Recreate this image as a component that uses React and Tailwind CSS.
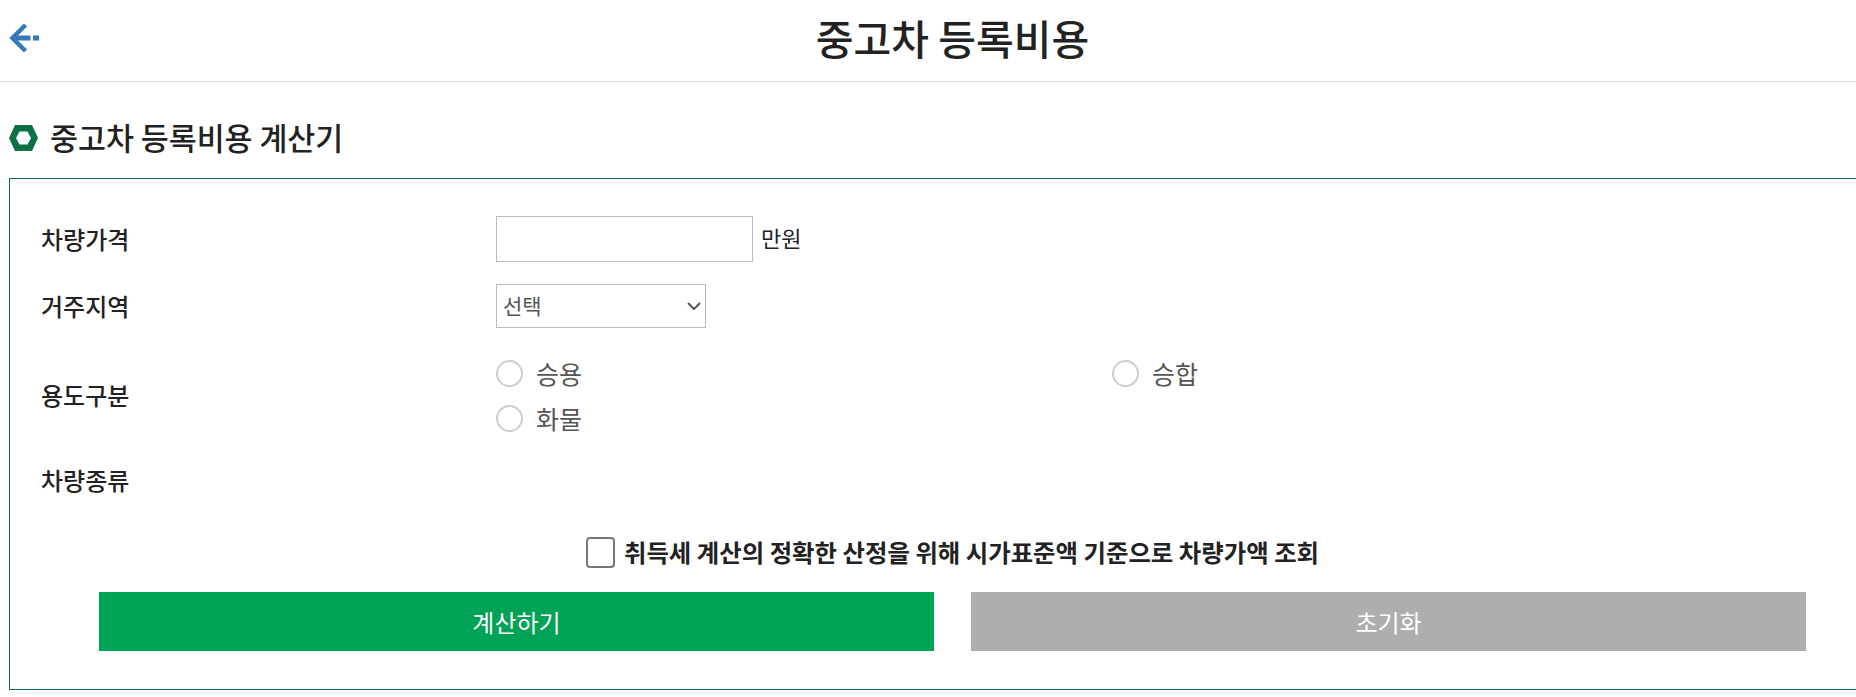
const FONT = "font-['Noto_Sans_CJK_KR','Noto_Sans',sans-serif]";

const Row = ({ label, className, children }) => (
  <div className={`flex items-center ${className}`}>
    <div className="w-[455px] shrink-0 text-[24px] font-medium text-[#222] leading-none">{label}</div>
    {children}
  </div>
);

const Radio = ({ label }) => (
  <label className="flex items-center gap-[13px] h-[27px]">
    <input type="radio" name="use" className="appearance-none w-[27px] h-[27px] rounded-full border-2 border-[#ccc] bg-white" />
    <span className="text-[25px] text-[#555] leading-none">{label}</span>
  </label>
);

export default function App() {
  return (
    <div className={`w-full h-[697px] overflow-hidden bg-white ${FONT}`}>
      <div className="w-[1905px]">
        <header className="grid grid-cols-[1fr_auto_1fr] items-center h-[82px] border-b border-[#ddd]">
          <a href="#" className="pl-[9px] pb-[6px]">
            <svg width="30" height="30" viewBox="0 0 30 30" className="block">
              <path d="M16.5 2 L3.5 15 L16.5 28" fill="none" stroke="#337ab7" strokeWidth="4.5" />
              <path d="M4 12.5 H21.5 V17.5 H4 Z M24 12.5 H30 V17.5 H24 Z" fill="#337ab7" />
            </svg>
          </a>
          <h1 className="text-[41px] font-medium text-[#222] leading-none pb-[6px]">중고차 등록비용</h1>
          <div />
        </header>

        <div className="px-[9px] pt-[43px]">
          <div className="flex items-center gap-[12px] h-[26px] mb-[27px]">
            <svg width="29" height="26" viewBox="0 0 29 26" className="shrink-0">
              <path
                fillRule="evenodd"
                d="M6 0 H23 L29 13 L23 26 H6 L0 13 Z M10.5 6.5 L7 13 L10.5 19.5 H18.5 L22 13 L18.5 6.5 Z"
                fill="#0b7144"
              />
            </svg>
            <h2 className="text-[30.4px] font-medium text-[#222] leading-none pb-[2px]">중고차 등록비용 계산기</h2>
          </div>

          <div className="border border-[#0b7144] h-[512px] pl-[31px] pr-[89px] pt-[37px]">
            <Row label="차량가격" className="h-[46px]">
              <input type="text" className="w-[257px] h-[46px] border border-[#bbb] bg-white" />
              <span className="ml-[8px] mb-[4px] text-[22px] text-[#222] leading-none">만원</span>
            </Row>

            <Row label="거주지역" className="h-[44px] mt-[22px]">
              <div className="relative w-[210px] h-[44px]">
                <select className="appearance-none w-full h-full border border-[#bbb] bg-white text-[21px] text-[#555] pl-[6px]">
                  <option>선택</option>
                </select>
                <svg width="14" height="8" viewBox="0 0 14 8" className="absolute right-[5px] top-[18px]">
                  <path d="M1 1 L7 7 L13 1" fill="none" stroke="#555" strokeWidth="2" />
                </svg>
              </div>
            </Row>

            <Row label="용도구분" className="h-[72px] mt-[31px]">
              <div className="grid grid-cols-[616px_616px] gap-y-[18px] mt-[2px]">
                <Radio label="승용" />
                <Radio label="승합" />
                <Radio label="화물" />
              </div>
            </Row>

            <Row label="차량종류" className="h-[24px] mt-[37px]" />

            <label className="flex items-center justify-center gap-[9px] h-[31px] mt-[45px] ml-[58px]">
              <input type="checkbox" className="appearance-none w-[29px] h-[31px] rounded-[4px] border-2 border-[#777] bg-white" />
              <span className="text-[24.4px] font-bold text-[#222] leading-none">
                취득세 계산의 정확한 산정을 위해 시가표준액 기준으로 차량가액 조회
              </span>
            </label>

            <div className="flex gap-[37px] mt-[24px] ml-[58px]">
              <button className="w-[835px] h-[59px] bg-[#00a256] text-white text-[24px]">계산하기</button>
              <button className="w-[835px] h-[59px] bg-[#aeaeae] text-white text-[24px]">초기화</button>
            </div>
          </div>
        </div>
      </div>
    </div>
  );
}
